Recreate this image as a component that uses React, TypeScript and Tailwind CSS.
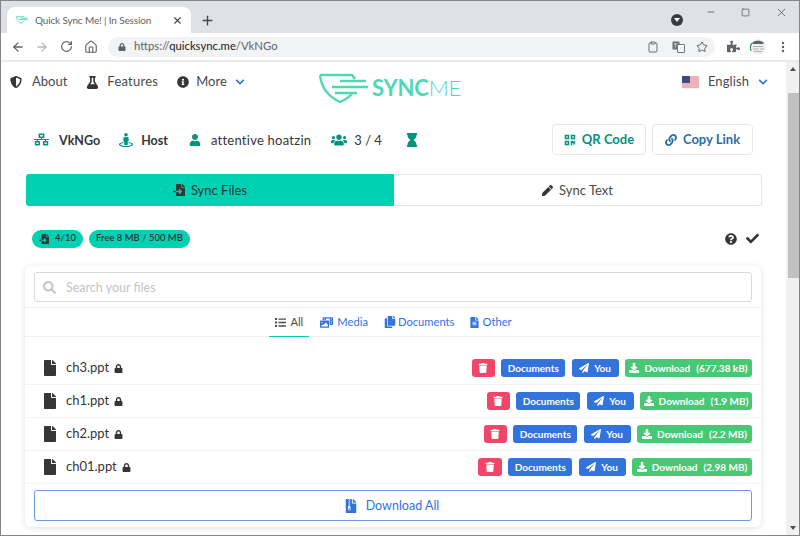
import { ArrowLeft, ArrowRight, RotateCw, Home, Clipboard, Star, Minus, Square, X, Plus, EllipsisVertical } from 'lucide-react'
import {
  FaShieldAlt, FaFlask, FaInfoCircle, FaChevronDown, FaNetworkWired, FaStreetView, FaUser, FaUsers,
  FaHourglass, FaQrcode, FaLink, FaFileImport, FaPen, FaQuestionCircle, FaCheck, FaSearch, FaList,
  FaPhotoVideo, FaCopy, FaFileAlt, FaFile, FaLock, FaTrash, FaPaperPlane, FaDownload, FaFileArchive,
  FaPuzzlePiece,
} from 'react-icons/fa'

const files = [
  { name: 'ch3.ppt', size: '(677.38 kB)', del: 'w-[23px]', dl: 'w-[127px]' },
  { name: 'ch1.ppt', size: '(1.9 MB)', del: 'w-[23px]', dl: 'w-[112px]' },
  { name: 'ch2.ppt', size: '(2.2 MB)', del: 'w-[23px]', dl: 'w-[115px]' },
  { name: 'ch01.ppt', size: '(2.98 MB)', del: 'w-[24px]', dl: 'w-[120px]' },
]

function Logo() {
  return (
    <div className="mt-[-1px] flex items-start">
      <svg width="50" height="31" viewBox="0 0 50 31" fill="none" stroke="#4fd8b4" strokeWidth="2.4">
        <path d="M1 2 H33 L36 6 M1 2 C2 12 6 22 21 29 C26 27 29 25 33 21" />
        <path d="M21 8 H47 M13 14 H49 M16 20 H38" />
      </svg>
      <div className="ml-[3px] text-[22px] leading-[30px] tracking-[-0.2px] text-[#4fd8b4] font-bold">
        SYNC<span className="font-light">ME</span>
      </div>
    </div>
  )
}

function Flag() {
  return (
    <svg width="17" height="13" viewBox="0 0 17 13">
      <rect width="17" height="13" fill="#f3f3f3" />
      <path d="M0 1h17M0 3h17M0 5h17M0 7h17M0 9h17M0 11h17" stroke="#e0727f" strokeWidth="1" />
      <rect width="8" height="7" fill="#3c4a86" />
    </svg>
  )
}

function TranslateIcon() {
  return (
    <svg width="13" height="12" viewBox="0 0 13 12" className="ml-[13px]">
      <rect x="0.5" y="0.5" width="7" height="8" rx="0.5" fill="#6f7478" />
      <rect x="5.5" y="3.5" width="7" height="8" rx="0.5" fill="#fff" stroke="#6f7478" />
      <path d="M2 3h3.5M3.5 2v4.5M7.5 9.5l2-4 2 4" fill="none" stroke="#d5d7d9" strokeWidth="0.8" />
    </svg>
  )
}

function AvatarIcon() {
  return (
    <svg width="16" height="16" viewBox="0 0 16 16" className="ml-[10px]">
      <circle cx="8" cy="8" r="8" fill="#eef0f1" />
      <path d="M2.5 3.5 C5 1 11 1 13.5 3.5 L13.5 5 H2.5 Z" fill="#5d6166" />
      <path d="M1 12 C0 9 0.3 6 2 4" fill="none" stroke="#2e9e5b" strokeWidth="1.2" />
      <path d="M3 7.5h10M3 10h6M10 10h4M4 12.5h8" stroke="#a5a8ac" strokeWidth="0.9" />
    </svg>
  )
}

function ChromeTop() {
  return (
    <>
      <div className="flex h-[32px] shrink-0 bg-[#dee1e6]">
        <div className="mt-[6px] ml-[6px] flex h-[26px] w-[184px] items-center rounded-t-lg bg-white pl-[9px] pr-[8px]">
          <svg width="12" height="10" viewBox="0 0 50 31" fill="none" stroke="#4fd8b4" strokeWidth="4">
            <path d="M1 2 H33 L36 6 M1 2 C2 12 6 22 21 29 C26 27 29 25 33 21" />
            <path d="M21 8 H47 M13 14 H49" />
          </svg>
          <span className="ml-[7px] whitespace-nowrap text-[10px] tracking-[-0.15px] text-[#5f6368]">Quick Sync Me! | In Session</span>
          <X size={11} strokeWidth={2.4} className="ml-auto text-[#45474a]" />
        </div>
        <Plus size={15} strokeWidth={2.2} className="mt-[12px] ml-[9px] text-[#45474a]" />
        <div className="mt-[13px] ml-[456px] flex h-[12px] w-[12px] items-center justify-center rounded-full bg-[#3a3b3d]">
          <div className="h-0 w-0 border-x-[3px] border-t-[4px] border-x-transparent border-t-white" />
        </div>
        <div className="mt-[5px] ml-[23px] flex items-start gap-[25px] text-[#3a3b3d]">
          <Minus size={10} strokeWidth={1.6} className="mt-[1px]" />
          <Square size={9} strokeWidth={1.6} className="mt-[2px]" />
          <X size={13} strokeWidth={1.2} />
        </div>
      </div>
      <div className="flex h-[27px] shrink-0 items-center bg-white text-[#5f6368]">
        <ArrowLeft size={14} strokeWidth={2.2} className="ml-[10px]" />
        <ArrowRight size={14} strokeWidth={2.2} className="ml-[10px] text-[#b6b8bb]" />
        <RotateCw size={13} strokeWidth={2.2} className="ml-[11px]" />
        <Home size={14} strokeWidth={1.9} className="ml-[11px]" />
        <div className="ml-[10px] flex h-[20px] w-[607px] items-center rounded-full bg-[#f1f3f4] pl-[10px]">
          <FaLock size={8} className="text-[#5f6368]" />
          <span className="ml-[8px] text-[11.3px] text-[#5f6368]">
            https://<span className="text-[#202124]">quicksync.me</span>/VkNGo
          </span>
          <Clipboard size={12} strokeWidth={1.8} className="ml-auto" />
          <TranslateIcon />
          <Star size={12} strokeWidth={2} className="mr-[7px] ml-[11px]" />
        </div>
        <FaPuzzlePiece size={13} className="ml-[12px]" />
        <AvatarIcon />
        <EllipsisVertical size={14} strokeWidth={2.2} className="ml-[10px]" />
      </div>
      <div className="h-[2px] shrink-0 bg-[#e9eaeb]" />
    </>
  )
}

function Scrollbar() {
  return (
    <div className="flex w-[13px] shrink-0 flex-col bg-[#f1f1f1]">
      <div className="mx-auto mt-[5px] h-0 w-0 border-x-[3px] border-b-[4px] border-x-transparent border-b-[#505050]" />
      <div className="mt-[22px] ml-[2px] h-[185px] bg-[#c1c1c1]" />
      <div className="mx-auto mt-auto mb-[5px] h-0 w-0 border-x-[3px] border-t-[4px] border-x-transparent border-t-[#505050]" />
    </div>
  )
}

function TagButton({ className, children }: { className: string; children: React.ReactNode }) {
  return (
    <div className={`flex h-[18px] items-center justify-center rounded-[3px] text-[10px] font-bold text-white ${className}`}>
      {children}
    </div>
  )
}

function FileRow({ file }: { file: (typeof files)[number] }) {
  return (
    <div className="flex h-[33px] items-center border-b border-[#f2f2f2] pr-[9px] pl-[17px] text-[#363636]">
      <FaFile size={16} className="text-[#363636]" />
      <span className="ml-[8px] text-[13px]">{file.name}</span>
      <FaLock size={9} className="ml-[5px]" />
      <div className="ml-auto flex gap-[6.4px]">
        <TagButton className={`bg-[#f14668] ${file.del}`}>
          <FaTrash size={10} />
        </TagButton>
        <TagButton className="w-[64px] bg-[#3273dc]">Documents</TagButton>
        <TagButton className="w-[47px] gap-[5px] bg-[#3273dc]">
          <FaPaperPlane size={10} />
          You
        </TagButton>
        <TagButton className={`gap-[5px] bg-[#48c774] ${file.dl}`}>
          <FaDownload size={10} />
          <span>Download</span>
          <span className="ml-[1px]">{file.size}</span>
        </TagButton>
      </div>
    </div>
  )
}

export default function App() {
  return (
    <div className="flex h-[536px] w-[800px] flex-col overflow-hidden border border-[#858585] bg-white font-['Lato',sans-serif]">
      <ChromeTop />
      <div className="flex min-h-0 flex-1">
        <div className="min-w-0 flex-1 text-[#4a4a4a]">
          {/* Navbar */}
          <div className="flex h-[41px] items-start pt-[12px] pl-[9px] text-[13px]">
            <div className="flex h-[16px] w-[309px] items-center">
              <FaShieldAlt size={12} className="text-[#363636]" />
              <span className="ml-[10px]">About</span>
              <FaFlask size={13} className="ml-[19px] text-[#363636]" />
              <span className="ml-[8px] tracking-[0.25px]">Features</span>
              <FaInfoCircle size={12} className="ml-[19px] text-[#363636]" />
              <span className="ml-[7px]">More</span>
              <FaChevronDown size={10} className="ml-[8px] text-[#3273dc]" />
            </div>
            <Logo />
            <div className="ml-auto flex h-[16px] items-center pr-[18px]">
              <Flag />
              <span className="ml-[9px] tracking-[0.1px]">English</span>
              <FaChevronDown size={10} className="ml-[9px] text-[#3273dc]" />
            </div>
          </div>

          {/* Room info */}
          <div className="mt-[21px] flex h-[31px] items-center pr-[33px] pl-[33px] text-[13px] text-[#363636]">
            <FaNetworkWired size={15} className="text-[#00947e]" />
            <span className="mt-[3px] ml-[10px] text-[12.5px] font-bold">VkNGo</span>
            <FaStreetView size={14} className="ml-[19px] text-[#00947e]" />
            <span className="mt-[3px] ml-[8px] text-[12.5px] font-bold">Host</span>
            <FaUser size={12} className="ml-[21px] text-[#00947e]" />
            <span className="mt-[2px] ml-[10px] tracking-[0.25px]">attentive hoatzin</span>
            <FaUsers size={16} className="ml-[20px] text-[#00947e]" />
            <span className="mt-[2px] ml-[7px]">3 / 4</span>
            <FaHourglass size={14} className="ml-[23px] text-[#00947e]" />
            <div className="ml-auto flex gap-[6px] text-[13px] font-bold">
              <div className="flex h-[31px] w-[94px] items-center justify-center gap-[6px] rounded-[4px] border border-[#e8e8e8] text-[#00947e]">
                <FaQrcode size={12} />
                QR Code
              </div>
              <div className="flex h-[31px] w-[101px] items-center justify-center gap-[6px] rounded-[4px] border border-[#e8e8e8] text-[#296fa8]">
                <FaLink size={12} />
                Copy Link
              </div>
            </div>
          </div>

          {/* Mode tabs */}
          <div className="mt-[19px] mr-[24px] ml-[25px] flex h-[32px] text-[13px]">
            <div className="flex w-[368px] items-center justify-center gap-[6px] rounded-l-[3px] bg-[#00d1b2] text-[#363636]">
              <FaFileImport size={12} />
              <span className="mt-[2px]">Sync Files</span>
            </div>
            <div className="flex flex-1 items-center justify-center gap-[6px] rounded-r-[3px] border border-[#e6e6e6] border-l-0">
              <FaPen size={11} className="text-[#363636]" />
              <span className="mt-[2px]">Sync Text</span>
            </div>
          </div>

          {/* Usage */}
          <div className="mt-[23px] flex h-[19px] items-center pr-[27px] pl-[31px] text-[9.5px] font-semibold text-[#363636]">
            <div className="flex h-[18px] w-[51px] items-center justify-center gap-[6px] rounded-full bg-[#00d1b2]">
              <FaFileImport size={10} />
              4/10
            </div>
            <div className="ml-[6px] flex h-[18px] w-[101px] items-center justify-center rounded-full bg-[#00d1b2]">
              Free 8 MB / 500 MB
            </div>
            <FaQuestionCircle size={12} className="ml-auto" />
            <FaCheck size={13} className="ml-[9px]" />
          </div>

          {/* Files card */}
          <div className="mt-[18px] mr-[25px] ml-[24px] rounded-[6px] bg-white shadow-[0_1px_6px_rgba(10,10,10,0.12)]">
            <div className="h-[42px] border-b border-[#efefef] px-[9px] pt-[6px]">
              <div className="flex h-[30px] items-center rounded-[3px] border border-[#dbdbdb] pl-[8px] text-[12.5px] text-[#c4c4c4]">
                <FaSearch size={13} className="text-[#c4c4c4]" />
                <span className="mt-[3px] ml-[10px]">Search your files</span>
              </div>
            </div>
            <div className="flex h-[29px] justify-center border-b border-[#efefef] pr-[5px] text-[11.2px] text-[#3273dc]">
              <div className="mb-[-1px] flex w-[40px] items-center justify-center gap-[4px] border-b-[1.5px] border-[#00d1b2] text-[#4a4a4a]">
                <FaList size={11} />
                All
              </div>
              <div className="ml-[11px] flex items-center gap-[4px]">
                <FaPhotoVideo size={13} />
                Media
              </div>
              <div className="ml-[16px] flex items-center gap-[2px]">
                <FaCopy size={12} />
                Documents
              </div>
              <div className="ml-[15px] flex items-center gap-[2px]">
                <FaFileAlt size={11} />
                Other
              </div>
            </div>
            <div className="pt-[15px]">
              {files.map((file) => (
                <FileRow key={file.name} file={file} />
              ))}
            </div>
            <div className="px-[9px] pt-[6px] pb-[6px]">
              <div className="flex h-[31px] items-center justify-center gap-[8px] rounded-[3px] border border-[#6d9be6] pr-[3px] text-[12.5px] text-[#3273dc]">
                <FaFileArchive size={14} />
                <span className="mt-[2px]">Download All</span>
              </div>
            </div>
          </div>
        </div>
        <Scrollbar />
      </div>
    </div>
  )
}
